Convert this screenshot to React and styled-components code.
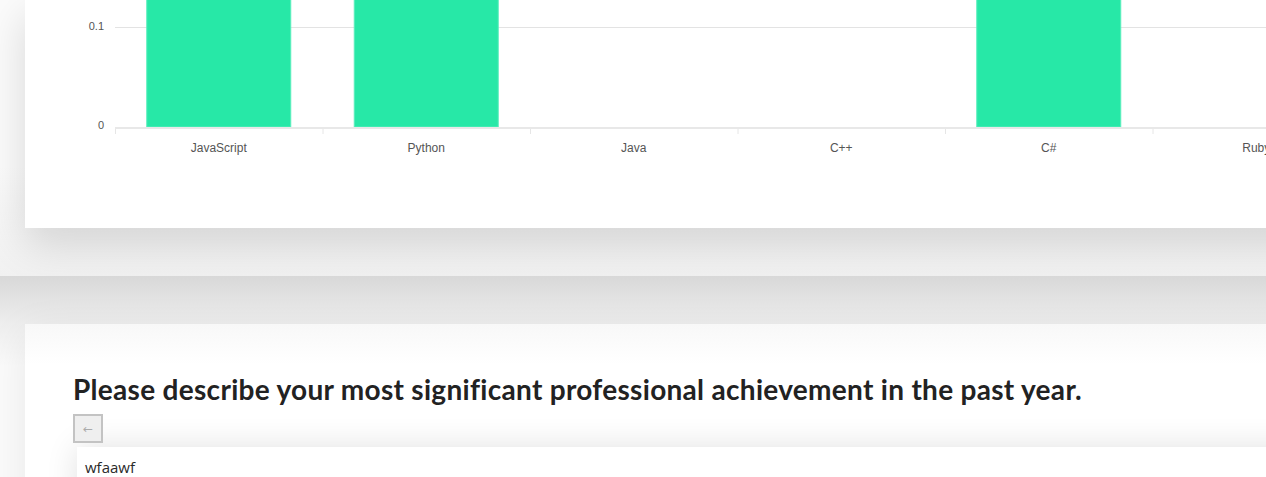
import styled, { createGlobalStyle } from 'styled-components';

const GlobalStyle = createGlobalStyle`
  html, body {
    margin: 0;
    padding: 0;
    overflow: hidden;
    background: #fbfbfb;
  }
`;

const languages = [
  { name: 'JavaScript', value: 0.2 },
  { name: 'Python', value: 0.2 },
  { name: 'Java', value: 0 },
  { name: 'C++', value: 0 },
  { name: 'C#', value: 0.2 },
  { name: 'Ruby', value: 0 },
  { name: 'Go', value: 0 },
];

// chart geometry (svg coords, card-relative)
const AXIS_X = 90;
const ZERO_Y = 127;
const PX_PER_UNIT = 1000; // 0.1 -> 100px
const COL = 207.5;
const BAR = 145;

const BarChart = ({ data }) => {
  const width = AXIS_X + COL * data.length;
  return (
    <ChartSvg width={width} height={160}>
      <line x1={AXIS_X} y1={27.5} x2={width} y2={27.5} stroke="#e3e3e3" strokeWidth="1" />
      <text x={AXIS_X - 11} y={30} textAnchor="end" fontSize="11" fill="#555">0.1</text>
      <text x={AXIS_X - 11} y={129} textAnchor="end" fontSize="11" fill="#555">0</text>

      {data.map((d, i) => {
        const left = AXIS_X + COL * i;
        const h = d.value * PX_PER_UNIT;
        return (
          <g key={d.name}>
            {h > 0 && (
              <rect
                x={left + (COL - BAR) / 2 + 0.5}
                y={ZERO_Y - h}
                width={BAR - 1}
                height={h}
                fill="#27e8a7"
                stroke="#5aeebd"
                strokeWidth="1"
              />
            )}
            <line x1={left + 0.5} y1={ZERO_Y} x2={left + 0.5} y2={ZERO_Y + 7} stroke="#e6e6e6" strokeWidth="1" />
            <text x={left + COL / 2} y={151.5} textAnchor="middle" fontSize="12" fill="#555">
              {d.name}
            </text>
          </g>
        );
      })}
      <line x1={AXIS_X} y1={ZERO_Y + 1} x2={width} y2={ZERO_Y + 1} stroke="#e8e8e8" strokeWidth="2" />
    </ChartSvg>
  );
};

const App = () => {
  return (
    <>
      <GlobalStyle />
      <Page>
        <ResultSection>
          <ChartCard>
            <BarChart data={languages} />
          </ChartCard>
        </ResultSection>
        <QuestionSection>
          <QuestionCard>
            <Heading>Please describe your most significant professional achievement in the past year.</Heading>
            <BackButton disabled>←</BackButton>
            <Answer>wfaawf</Answer>
          </QuestionCard>
        </QuestionSection>
      </Page>
    </>
  );
};

const Page = styled.div`
  width: 1420px;
  min-height: 477px;
`;

const ResultSection = styled.section`
  padding: 0 0 48px 25px;
  background: linear-gradient(to bottom, #fbfbfb 60%, #f1f1f1 100%);
`;

const ChartCard = styled.div`
  height: 228px;
  background: #fff;
  box-shadow: 0 16px 40px rgba(0, 0, 0, 0.14);
  overflow: hidden;
`;

const ChartSvg = styled.svg`
  display: block;
  font-family: 'Liberation Sans', Arial, sans-serif;
`;

const QuestionSection = styled.section`
  padding: 48px 0 0 25px;
  background: linear-gradient(to bottom, #d8d8d8 0, #eeeeee 48px, #fbfbfb 90px);
`;

const QuestionCard = styled.div`
  padding: 47px 0 40px 48px;
  background: linear-gradient(to bottom, #f8f8f8 0, #ffffff 40px);
  box-shadow: 0 10px 40px rgba(0, 0, 0, 0.08);
`;

const Heading = styled.h2`
  margin: 0;
  font-family: 'Lato', 'Open Sans', sans-serif;
  font-weight: 700;
  font-size: 28px;
  line-height: 36px;
  letter-spacing: 0.3px;
  color: #222;
`;

const BackButton = styled.button`
  display: inline-block;
  margin-top: 7px;
  width: 30px;
  height: 29px;
  padding: 0;
  border: 2px solid #c3c3c3;
  background: #efefef;
  color: #ababab;
  font-family: 'DejaVu Sans', sans-serif;
  font-size: 12px;
  line-height: 1;
`;

const Answer = styled.div`
  margin: 4px 0 0 4px;
  min-height: 60px;
  padding: 10px 8px;
  background: #fff;
  box-shadow: 0 0 32px rgba(0, 0, 0, 0.12);
  font-family: 'Open Sans', sans-serif;
  font-size: 15px;
  line-height: 20px;
  color: #2a2a2a;
`;

export default App;
